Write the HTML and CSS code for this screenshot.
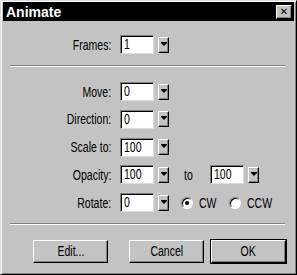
FILE: index.html
```html
<!DOCTYPE html>
<html lang="en">
<head>
    <meta charset="UTF-8">
    <title>Animate</title>
    <link rel="stylesheet" href="styles.css">
</head>
<body>
    <div class="window">
        <div class="titlebar">
            <span class="title">Animate</span>
            <span class="close">&#x2715;</span>
        </div>

        <div class="section top">
            <div class="row">
                <span class="label"><span class="t">Frames:</span></span>
                <span class="field"><span class="t">1</span></span>
                <span class="drop"></span>
            </div>
        </div>

        <div class="sep"></div>

        <div class="section rows">
            <div class="row">
                <span class="label"><span class="t">Move:</span></span>
                <span class="field"><span class="t">0</span></span>
                <span class="drop"></span>
            </div>
            <div class="row">
                <span class="label"><span class="t">Direction:</span></span>
                <span class="field"><span class="t">0</span></span>
                <span class="drop"></span>
            </div>
            <div class="row">
                <span class="label"><span class="t">Scale to:</span></span>
                <span class="field"><span class="t">100</span></span>
                <span class="drop"></span>
            </div>
            <div class="row">
                <span class="label"><span class="t">Opacity:</span></span>
                <span class="field"><span class="t">100</span></span>
                <span class="drop"></span>
                <span class="to t">to</span>
                <span class="field"><span class="t">100</span></span>
                <span class="drop"></span>
            </div>
            <div class="row">
                <span class="label"><span class="t">Rotate:</span></span>
                <span class="field"><span class="t">0</span></span>
                <span class="drop"></span>
                <span class="radio checked"></span>
                <span class="radio-text t">CW</span>
                <span class="radio"></span>
                <span class="radio-text t">CCW</span>
            </div>
        </div>

        <div class="sep bottom-sep"></div>

        <div class="buttons">
            <span class="btn"><span class="t">Edit...</span></span>
            <span class="btn cancel"><span class="t">Cancel</span></span>
            <span class="btn default"><span class="t">OK</span></span>
        </div>
    </div>
</body>
</html>
```

FILE: styles.css
```css
body {
    margin: 0;
    background: #c3c3c3;
    font-family: "Liberation Sans", Arial, sans-serif;
    font-size: 14px;
    color: #000;
}

/* narrow dialog font */
.t {
    display: inline-block;
    transform: scaleX(0.75);
    transform-origin: left center;
}

.label .t {
    transform-origin: right center;
}

.btn .t {
    transform-origin: center center;
}

.window {
    width: 297px;
    height: 275px;
    box-sizing: border-box;
    background: #c3c3c3;
    border-top: 1px solid #dcdcdc;
    border-left: 1px solid #dcdcdc;
    border-right: 1px solid #000;
    border-bottom: 1px solid #000;
    box-shadow: inset 1px 1px #fff, inset -1px -1px #808080;
    padding: 1px 2px 0 2px;
}

.titlebar {
    height: 19px;
    background: #000;
    color: #fff;
    display: flex;
    align-items: center;
    justify-content: space-between;
    padding: 0 2px 0 3px;
}

.title {
    font-weight: bold;
    font-size: 14px;
}

.close {
    width: 16px;
    height: 14px;
    box-sizing: border-box;
    background: #c3c3c3;
    color: #000;
    border-top: 1px solid #fff;
    border-left: 1px solid #fff;
    border-right: 1px solid #000;
    border-bottom: 1px solid #000;
    box-shadow: inset -1px -1px #808080;
    font-family: "DejaVu Sans", sans-serif;
    font-size: 10px;
    font-weight: bold;
    line-height: 12px;
    text-align: center;
}

.section.top {
    padding-top: 14px;
}

.rows {
    display: flex;
    flex-direction: column;
    gap: 8.8px;
}

.row {
    display: flex;
    align-items: center;
    height: 19px;
}

.label {
    width: 108px;
    text-align: right;
    margin-right: 9px;
}

.field {
    width: 34px;
    height: 19px;
    box-sizing: border-box;
    background: #fff;
    border-top: 1px solid #808080;
    border-left: 1px solid #808080;
    border-right: 1px solid #dcdcdc;
    border-bottom: 1px solid #dcdcdc;
    box-shadow: inset 1px 1px #000;
    padding: 0 0 0 3px;
    line-height: 17px;
}

.drop {
    width: 11px;
    height: 16px;
    box-sizing: border-box;
    margin-left: 4px;
    background: #c3c3c3;
    border-top: 1px solid #fff;
    border-left: 1px solid #fff;
    border-right: 1px solid #000;
    border-bottom: 1px solid #000;
    box-shadow: inset -1px -1px #808080;
    position: relative;
}

.drop::after {
    content: "";
    position: absolute;
    left: 2px;
    top: 5px;
    border-left: 3px solid transparent;
    border-right: 3px solid transparent;
    border-top: 3px solid #000;
    box-shadow: 0 -1px #000;
}

.to {
    margin-left: 15px;
    margin-right: 14px;
}

.radio {
    width: 12px;
    height: 12px;
    box-sizing: border-box;
    border-radius: 50%;
    background: #fff;
    border: 1px solid;
    border-color: #808080 #fff #fff #808080;
    box-shadow: inset 1px 1px #000;
    margin-left: 12px;
    position: relative;
}

.radio.checked::after {
    content: "";
    position: absolute;
    left: 3px;
    top: 3px;
    width: 4px;
    height: 4px;
    border-radius: 50%;
    background: #000;
}

.radio + .radio-text {
    margin-left: 6px;
}

.radio-text + .radio {
    margin-left: 7px;
}

.sep {
    height: 1px;
    background: #808080;
    border-bottom: 1px solid #fff;
    margin: 11px 9px 15px 7px;
}

.bottom-sep {
    margin-top: 11px;
    margin-bottom: 0;
}

.buttons {
    display: flex;
    padding: 15px 0 0 30px;
}

.btn {
    width: 75px;
    height: 23px;
    box-sizing: border-box;
    border-top: 1px solid #fff;
    border-left: 1px solid #fff;
    border-right: 1px solid #000;
    border-bottom: 1px solid #000;
    box-shadow: inset -1px -1px #808080;
    text-align: center;
    line-height: 21px;
}

.btn.cancel {
    margin-left: 21px;
}

.btn.default {
    margin-left: 7px;
    outline: 1px solid #000;
}
```
